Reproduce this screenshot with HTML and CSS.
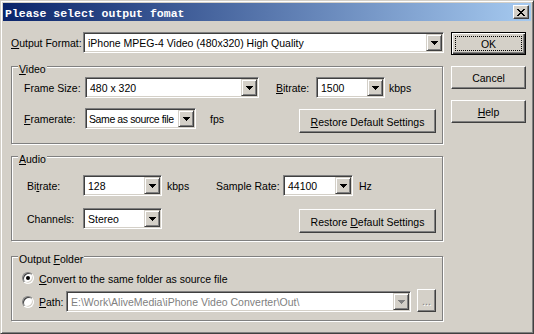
FILE: index.html
```html
<!DOCTYPE html>
<html lang="en">
<head>
<meta charset="utf-8">
<title>Please select output fomat</title>
<link rel="stylesheet" href="styles.css">
</head>
<body>
<div class="window">
  <div class="titlebar">
    <span class="title">Please select output fomat</span>
    <span class="close"><svg class="x-glyph" width="8" height="7" viewBox="0 0 8 7"><path d="M0 0h2v1H0zM6 0h2v1H6zM1 1h2v1H1zM5 1h2v1H5zM2 2h4v1H2zM3 3h2v1H3zM2 4h4v1H2zM1 5h2v1H1zM5 5h2v1H5zM0 6h2v1H0zM6 6h2v1H6z"/></svg></span>
  </div>
  <div class="client">
    <div class="main">
      <div class="row format-row">
        <span class="lbl w-format"><u>O</u>utput Format:</span>
        <div class="combo grow"><span class="combo-text">iPhone MPEG-4 Video (480x320) High Quality</span><span class="drop"><svg class="arrow" width="7" height="4" viewBox="0 0 7 4"><path d="M0 0h7v1h-1v1h-1v1h-1v1h-1v-1h-1v-1h-1v-1h-1z"/></svg></span></div>
      </div>

      <div class="group video">
        <div class="legend"><u>V</u>ideo</div>
        <div class="row v1">
          <span class="lbl w-vlbl">Frame Size:</span>
          <div class="combo w-frame"><span class="combo-text">480 x 320</span><span class="drop"><svg class="arrow" width="7" height="4" viewBox="0 0 7 4"><path d="M0 0h7v1h-1v1h-1v1h-1v1h-1v-1h-1v-1h-1v-1h-1z"/></svg></span></div>
          <span class="lbl w-vbit"><u>B</u>itrate:</span>
          <div class="combo w-vbitc"><span class="combo-text">1500</span><span class="drop"><svg class="arrow" width="7" height="4" viewBox="0 0 7 4"><path d="M0 0h7v1h-1v1h-1v1h-1v1h-1v-1h-1v-1h-1v-1h-1z"/></svg></span></div>
          <span class="lbl unit-vkbps">kbps</span>
        </div>
        <div class="row v2">
          <span class="lbl w-vlbl"><u>F</u>ramerate:</span>
          <div class="combo w-rate"><span class="combo-text tight">Same as source file</span><span class="drop"><svg class="arrow" width="7" height="4" viewBox="0 0 7 4"><path d="M0 0h7v1h-1v1h-1v1h-1v1h-1v-1h-1v-1h-1v-1h-1z"/></svg></span></div>
          <span class="lbl unit-fps">fps</span>
          <div class="btn btn-restore"><span><u>R</u>estore Default Settings</span></div>
        </div>
      </div>

      <div class="group audio">
        <div class="legend"><u>A</u>udio</div>
        <div class="row a1">
          <span class="lbl w-albl">Bi<u>t</u>rate:</span>
          <div class="combo w-abit"><span class="combo-text">128</span><span class="drop"><svg class="arrow" width="7" height="4" viewBox="0 0 7 4"><path d="M0 0h7v1h-1v1h-1v1h-1v1h-1v-1h-1v-1h-1v-1h-1z"/></svg></span></div>
          <span class="lbl unit-akbps">kbps</span>
          <span class="lbl w-sample">Sample Rate:</span>
          <div class="combo w-srate"><span class="combo-text">44100</span><span class="drop"><svg class="arrow" width="7" height="4" viewBox="0 0 7 4"><path d="M0 0h7v1h-1v1h-1v1h-1v1h-1v-1h-1v-1h-1v-1h-1z"/></svg></span></div>
          <span class="lbl unit-hz">Hz</span>
        </div>
        <div class="row a2">
          <span class="lbl w-albl">Channels:</span>
          <div class="combo w-abit"><span class="combo-text">Stereo</span><span class="drop"><svg class="arrow" width="7" height="4" viewBox="0 0 7 4"><path d="M0 0h7v1h-1v1h-1v1h-1v1h-1v-1h-1v-1h-1v-1h-1z"/></svg></span></div>
          <div class="btn btn-restore"><span>Restore <u>D</u>efault Settings</span></div>
        </div>
      </div>

      <div class="group folder">
        <div class="legend">Output <u>F</u>older</div>
        <div class="row f1">
          <span class="radio checked"></span>
          <span class="lbl radio-text"><u>C</u>onvert to the same folder as source file</span>
        </div>
        <div class="row f2">
          <div class="radio-item">
            <span class="radio"></span>
            <span class="lbl radio-text w-path"><u>P</u>ath:</span>
          </div>
          <div class="combo disabled w-pathc"><span class="combo-text">E:\Work\AliveMedia\iPhone Video Converter\Out\</span><span class="drop"><svg class="arrow" width="7" height="4" viewBox="0 0 7 4"><path d="M0 0h7v1h-1v1h-1v1h-1v1h-1v-1h-1v-1h-1v-1h-1z"/></svg></span></div>
          <div class="btn btn-browse"><span>...</span></div>
        </div>
      </div>
    </div>

    <div class="side">
      <div class="btn btn-default"><span class="focus">OK</span></div>
      <div class="btn btn-side"><span>Cancel</span></div>
      <div class="btn btn-side"><span><u>H</u>elp</span></div>
    </div>
  </div>
</div>
</body>
</html>
```

FILE: styles.css
```css
* { box-sizing: border-box; }
html, body { margin: 0; padding: 0; }
body {
  width: 534px;
  height: 334px;
  overflow: hidden;
  background: #d4d0c8;
  color: #000;
  font-family: "Liberation Sans", Arial, sans-serif;
  font-size: 10.5px;
}
u { text-decoration: underline; text-underline-offset: 1px; }

.window {
  width: 534px;
  height: 334px;
  display: flex;
  flex-direction: column;
  background: #d4d0c8;
  border: 1px solid;
  border-color: #d4d0c8 #404040 #404040 #d4d0c8;
  box-shadow: inset 1px 1px #fff, inset -1px -1px #808080;
  padding: 2px;
}

/* title bar */
.titlebar {
  height: 18px;
  flex: none;
  display: flex;
  align-items: center;
  padding: 0 2px;
  background: linear-gradient(to right, #0a246a, #a6caf0);
}
.title {
  flex: 1;
  color: #fff;
  font-family: "Liberation Mono", "DejaVu Sans Mono", monospace;
  font-weight: bold;
  font-size: 11.5px;
  padding-top: 2px;
  white-space: nowrap;
}
.close {
  width: 16px;
  height: 14px;
  display: flex;
  align-items: center;
  justify-content: center;
  padding-top: 1px;
  background: #d4d0c8;
  border: 1px solid;
  border-color: #fff #404040 #404040 #fff;
  box-shadow: inset -1px -1px #808080;
}
.x-glyph, .arrow { display: block; shape-rendering: crispEdges; }

/* client area */
.client {
  flex: 1;
  display: flex;
  gap: 7px;
  padding: 11px 0 0 8px;
}
.main {
  width: 433px;
  display: flex;
  flex-direction: column;
}
.side {
  width: 75px;
  display: flex;
  flex-direction: column;
  gap: 11px;
}

/* rows and labels */
.row { display: flex; align-items: flex-start; }
.lbl {
  height: 21px;
  display: flex;
  align-items: center;
  padding-top: 1px;
  white-space: nowrap;
}
.grow { flex: 1; }
.w-format { width: 72px; }

/* combo boxes */
.combo {
  height: 21px;
  display: flex;
  background: #fff;
  border: 1px solid;
  border-color: #808080 #fff #fff #808080;
  box-shadow: inset 1px 1px #404040, inset -1px -1px #d4d0c8;
  padding: 1px;
}
.combo-text {
  flex: 1;
  min-width: 0;
  display: flex;
  align-items: center;
  padding: 1px 0 0 3px;
  white-space: nowrap;
  overflow: hidden;
}
.combo-text.tight { letter-spacing: -0.4px; padding-left: 2px; }
.drop {
  width: 16px;
  height: 17px;
  flex: none;
  display: flex;
  align-items: center;
  justify-content: center;
  padding-top: 1px;
  background: #d4d0c8;
  border: 1px solid;
  border-color: #d4d0c8 #404040 #404040 #d4d0c8;
  box-shadow: inset 1px 1px #fff, inset -1px -1px #808080;
}
.combo.disabled .combo-text { color: #808080; }
.combo.disabled .arrow { fill: #808080; }

/* buttons */
.btn {
  height: 23px;
  display: flex;
  align-items: center;
  justify-content: center;
  padding-top: 1px;
  background: #d4d0c8;
  border: 1px solid;
  border-color: #fff #404040 #404040 #fff;
  box-shadow: inset -1px -1px #808080;
  white-space: nowrap;
}
.btn-default {
  border-color: #000;
  box-shadow: inset 1px 1px #fff, inset -1px -1px #404040, inset -2px -2px #808080;
  padding: 3px;
}
.focus {
  align-self: stretch;
  flex: 1;
  display: flex;
  align-items: center;
  justify-content: center;
  padding-top: 1px;
  border: 1px dotted #000;
}
.btn-restore {
  width: 137px;
  height: 24px;
  margin-left: auto;
  margin-top: 1px;
}
.btn-browse {
  width: 19px;
  margin-left: 6px;
  color: #808080;
  text-shadow: 1px 1px #fff;
}

/* group boxes */
.group {
  margin-right: 1px;
  border: 1px solid #808080;
  box-shadow: inset 1px 1px #fff, 1px 1px #fff;
  display: flex;
  flex-direction: column;
}
.legend {
  width: max-content;
  height: 13px;
  line-height: 13px;
  margin-top: -4px;
  padding: 0 1px;
  background: #d4d0c8;
  white-space: nowrap;
}

.video { margin-top: 13px; padding: 0 6px 10px 12px; }
.video .legend { margin-left: -6px; }
.video .v1 { margin-top: 1px; }
.video .v2 { margin-top: 10px; }
.w-vlbl { width: 61px; }
.w-frame { width: 174px; }
.w-vbit { width: 40px; margin-left: 17px; }
.w-vbitc { width: 69px; }
.unit-vkbps { margin-left: 4px; }
.w-rate { width: 111px; }
.unit-fps { margin-left: 14px; }

.audio { margin-top: 12px; padding: 0 6px 7px 15px; }
.audio .legend { margin-left: -9px; }
.audio .a1 { margin-top: 9px; }
.audio .a2 { margin-top: 12px; }
.w-albl { width: 56px; }
.w-abit { width: 79px; }
.unit-akbps { width: 49px; margin-left: 5px; }
.w-sample { width: 67px; }
.w-srate { width: 70px; }
.unit-hz { margin-left: 6px; }

.folder { margin-top: 15px; padding: 0 6px 8px 10px; }
.folder .legend { margin-left: -4px; }
.folder .f1 { margin-top: 4px; height: 16px; align-items: center; }
.folder .f2 { margin-top: 3px; align-items: flex-end; }
.radio-item { height: 21px; display: flex; align-items: center; }
.radio {
  width: 12px;
  height: 12px;
  flex: none;
  border-radius: 50%;
  background: #fff;
  border: 1px solid;
  border-color: #808080 #fff #fff #808080;
  box-shadow: inset 1px 1px #404040, inset -1px -1px #d4d0c8;
  display: flex;
  align-items: center;
  justify-content: center;
}
.radio.checked::after {
  content: "";
  width: 4px;
  height: 4px;
  border-radius: 50%;
  background: #000;
}
.radio-text { margin-left: 5px; }
.f1 .radio-text { height: 16px; }
.w-path { width: 27px; }
.w-pathc { width: 345px; }
```
